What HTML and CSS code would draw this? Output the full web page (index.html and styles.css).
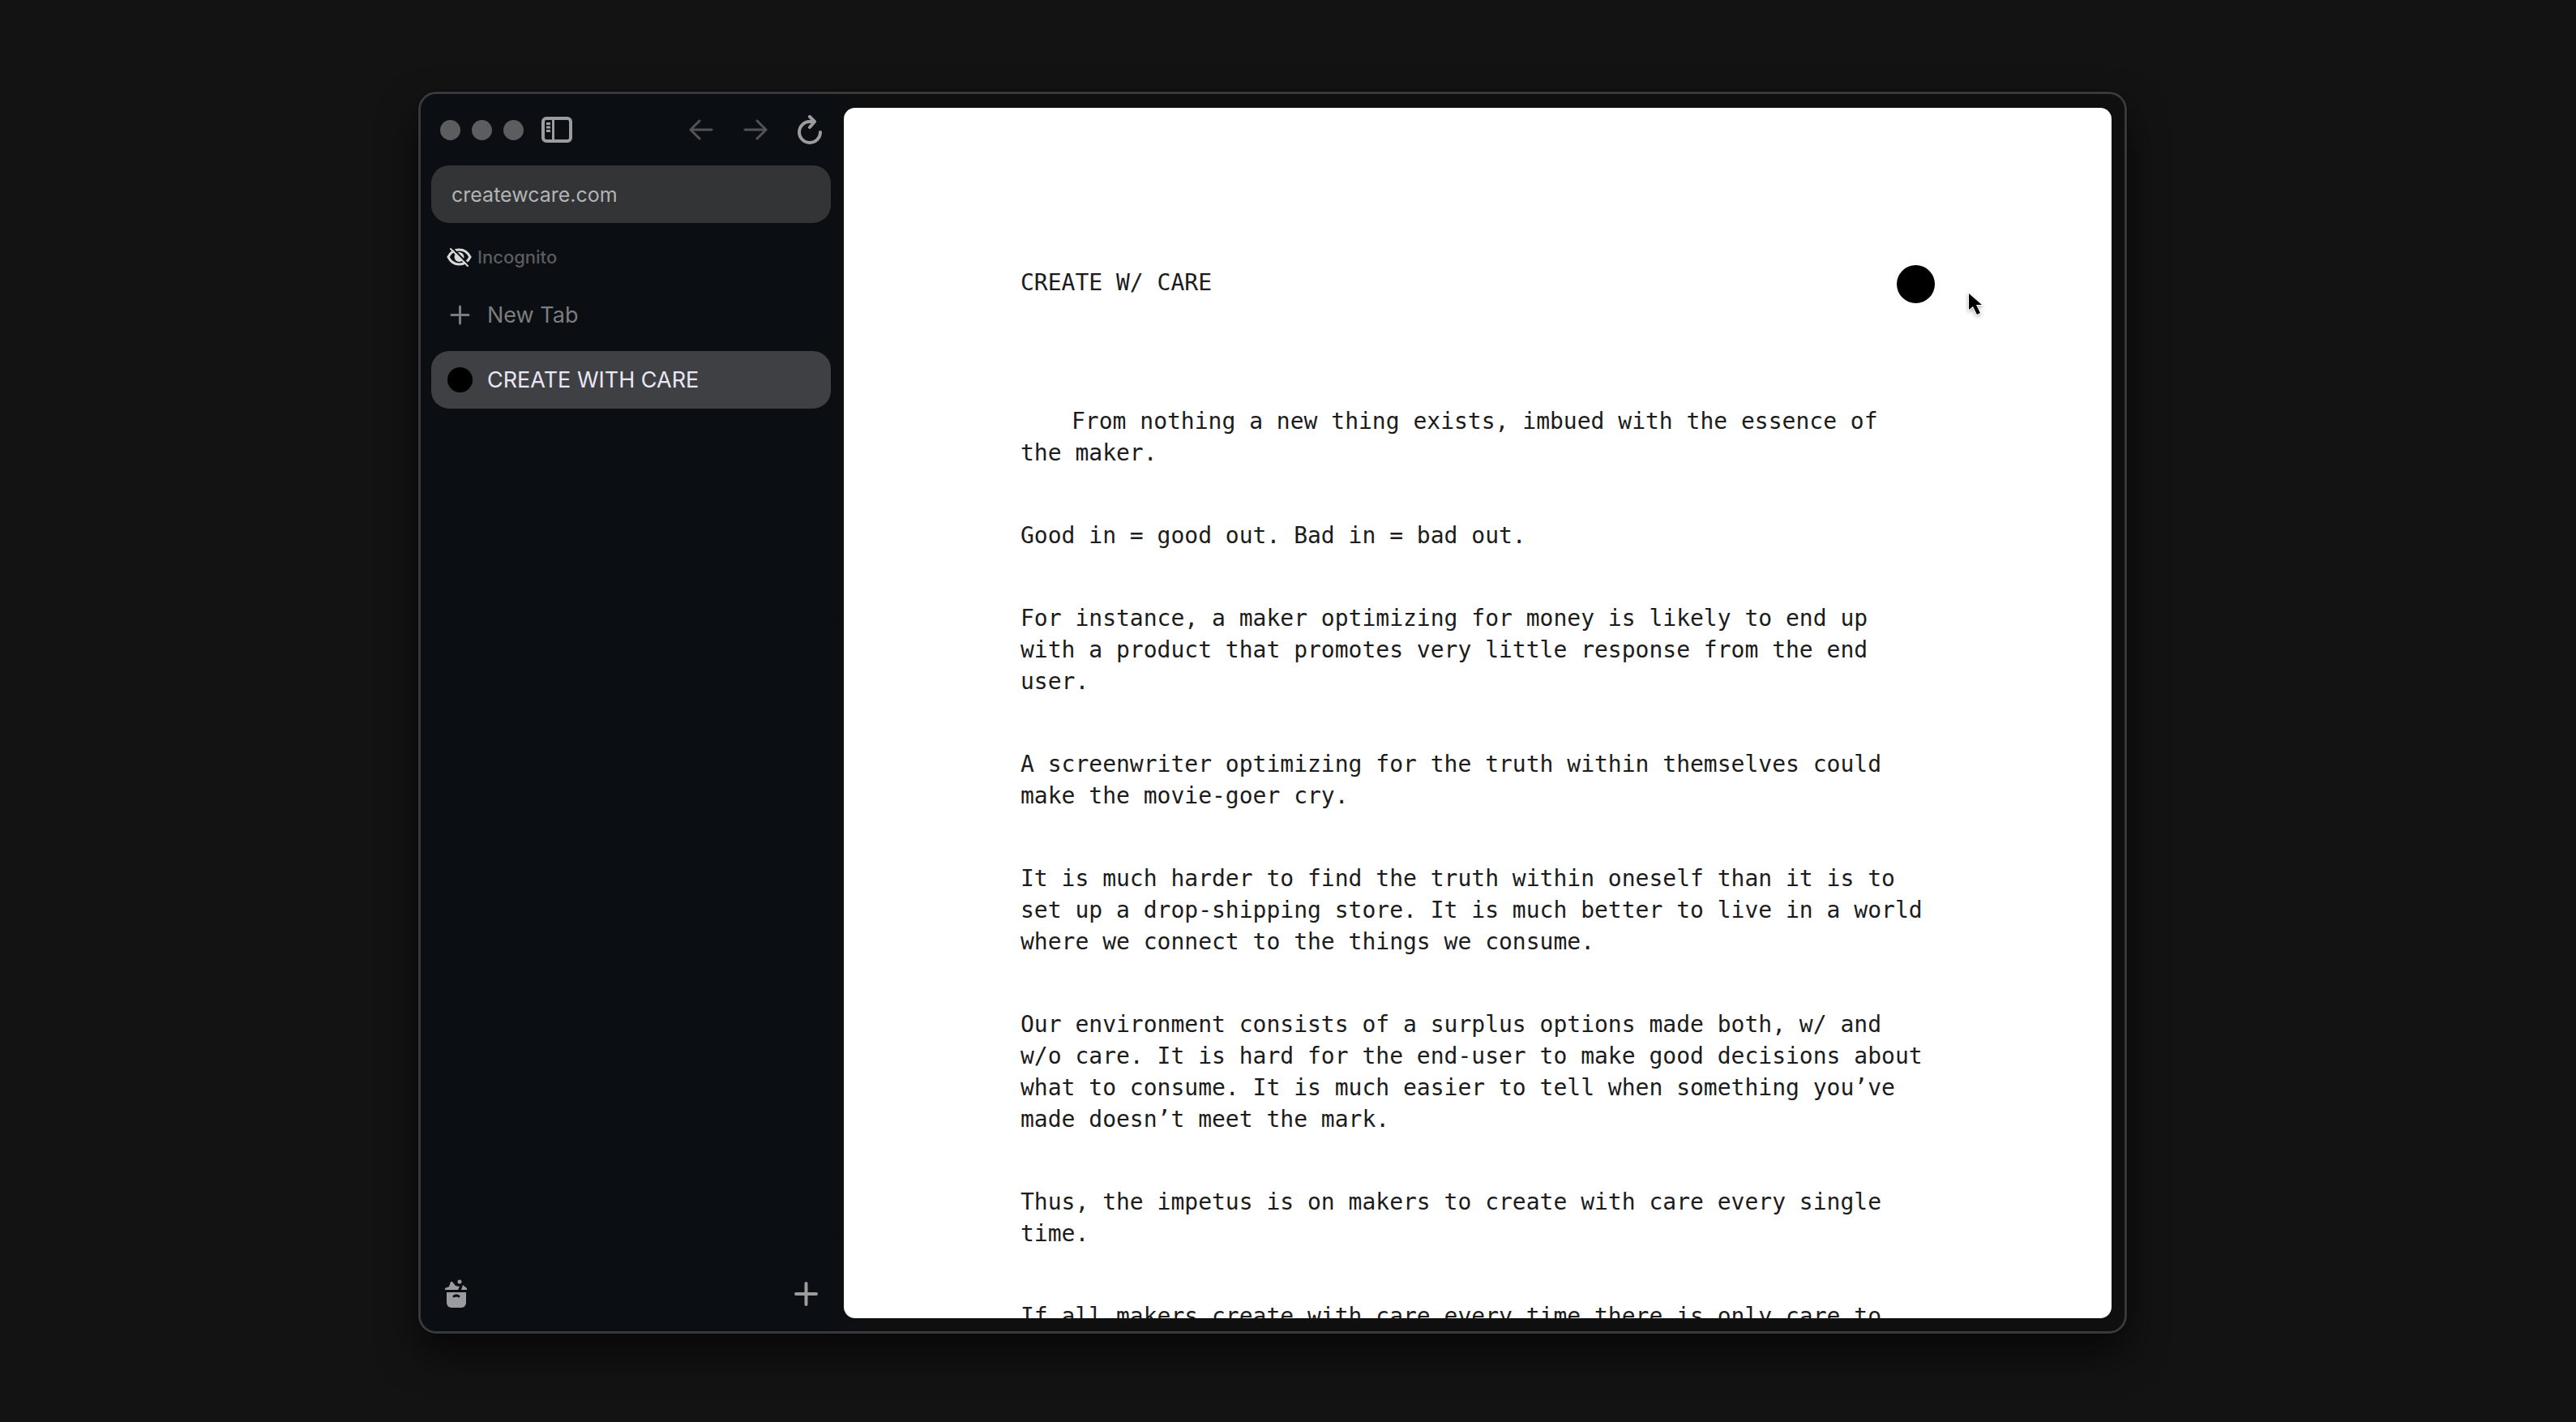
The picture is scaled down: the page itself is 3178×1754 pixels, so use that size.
FILE: index.html
```html
<!DOCTYPE html>
<html lang="en">
<head>
<meta charset="utf-8">
<title>CREATE WITH CARE</title>
<link rel="stylesheet" href="styles.css">
</head>
<body>
<div class="window">
  <aside class="sidebar">
    <div class="toolbar">
      <div class="lights">
        <button class="light" aria-label="Close"></button>
        <button class="light" aria-label="Minimize"></button>
        <button class="light" aria-label="Zoom"></button>
      </div>
      <button class="icon-button" aria-label="Toggle sidebar">
        <svg width="38" height="32" viewBox="0 0 38 32" fill="none" stroke="currentColor">
          <rect x="2" y="2" width="34" height="28" rx="4" stroke-width="4"/>
          <path d="M14.500 2v28" stroke-width="3"/>
          <path d="M6 8.500h5M6 13h5M6 17.500h5" stroke-width="3"/>
        </svg>
      </button>
      <nav class="history">
        <button class="icon-button dim" aria-label="Back">
          <svg width="30" height="26" viewBox="0 0 30 26" fill="none" stroke="currentColor" stroke-width="3" stroke-linecap="round" stroke-linejoin="round"><path d="M28 13H2M13 2L2 13l11 11"/></svg>
        </button>
        <button class="icon-button dim" aria-label="Forward">
          <svg width="30" height="26" viewBox="0 0 30 26" fill="none" stroke="currentColor" stroke-width="3" stroke-linecap="round" stroke-linejoin="round"><path d="M2 13h26M17 2l11 11-11 11"/></svg>
        </button>
        <button class="icon-button" aria-label="Reload">
          <svg width="30" height="36" viewBox="0 0 30 36" fill="none" stroke="currentColor" stroke-width="4" stroke-linecap="round" stroke-linejoin="round"><path d="M28 21a13 13 0 1 1-13-13h5"/><path d="M15 2l6 6-6 7"/></svg>
        </button>
      </nav>
    </div>
    <input class="address" type="text" value="createwcare.com" aria-label="Address">
    <div class="mode">
      <svg width="31" height="24" viewBox="0 0 31 24" fill="none" stroke="currentColor" stroke-width="3" stroke-linecap="round">
        <path d="M2 12C5 6 10 3 15.500 3S26 6 29 12c-3 6-8 9-13.500 9S5 18 2 12z"/>
        <circle cx="15.500" cy="12" r="6" fill="currentColor" stroke="none"/>
        <path d="M7 1l21 21" class="slash" stroke-width="2"/>
        <path d="M5 2l21 21" stroke-width="2"/>
      </svg>
      <span>Incognito</span>
    </div>
    <div class="tabs">
      <button class="tab">
        <svg class="tab-icon" viewBox="0 0 31 31" fill="none" stroke="currentColor" stroke-width="3" stroke-linecap="round"><path d="M15.500 5v21M5 15.500h21"/></svg>
        New Tab
      </button>
      <button class="tab active"><span class="tab-icon favicon"></span>CREATE WITH CARE</button>
    </div>
    <div class="footer">
      <button class="icon-button" aria-label="Archive">
        <svg width="28" height="36" viewBox="0 0 28 36" fill="currentColor">
          <path d="M2 16h24v13a6 6 0 0 1-6 6H8a6 6 0 0 1-6-6z"/>
          <path d="M0 13v-2l5-2 2-6h2l4 5 5 1-2 4z"/>
          <path d="M20 13l2-6 5 4v2z"/>
          <circle cx="18" cy="3" r="2.500"/>
          <path d="M11 21q3-2 6 0" fill="none" class="slot" stroke-width="3" stroke-linecap="round"/>
        </svg>
      </button>
      <button class="icon-button" aria-label="Add">
        <svg width="29" height="30" viewBox="0 0 29 30" fill="none" stroke="currentColor" stroke-width="4" stroke-linecap="round"><path d="M14.500 2v26M2 15h25"/></svg>
      </button>
    </div>
  </aside>
  <main class="page">
    <header class="masthead">
      <h1>CREATE W/ CARE</h1>
      <span class="dot"></span>
      <svg class="cursor" width="26" height="36" viewBox="0 0 26 36"><path d="M4 2v20l5-4 5 10 4-2-5-10h7z" fill="#000" stroke="#fff" stroke-width="2" paint-order="stroke"/></svg>
    </header>
    <article>
      <p class="lead">From nothing a new thing exists, imbued with the essence of the maker.</p>
      <p>Good in = good out. Bad in = bad out.</p>
      <p>For instance, a maker optimizing for money is likely to end up with a product that promotes very little response from the end user.</p>
      <p>A screenwriter optimizing for the truth within themselves could make the movie-goer cry.</p>
      <p>It is much harder to find the truth within oneself than it is to set up a drop-shipping store. It is much better to live in a world where we connect to the things we consume.</p>
      <p>Our environment consists of a surplus options made both, w/ and w/o care. It is hard for the end-user to make good decisions about what to consume. It is much easier to tell when something you’ve made doesn’t meet the mark.</p>
      <p>Thus, the impetus is on makers to create with care every single time.</p>
      <p>If all makers create with care every time there is only care to</p>
    </article>
  </main>
</div>
</body>
</html>
```
FILE: styles.css
```css
* {
  box-sizing: border-box;
}

body {
  margin: 0;
  height: 100vh;
  padding: 113px 554px 109px 516px;
  background: #131313;
  font-family: Inter, "Liberation Sans", sans-serif;
}

button {
  margin: 0;
  padding: 0;
  border: 0;
  background: none;
  color: inherit;
  font: inherit;
}

svg {
  display: block;
}

.window {
  display: grid;
  grid-template-columns: 522px minmax(0, 1fr);
  height: 100%;
  padding: 17px 16px 16px 0;
  border: 3px solid #38393a;
  border-radius: 22px;
  background: linear-gradient(90deg, #0b0e12 500px, #0f0f0f 560px);
  box-shadow: 0 0 0 1px #070707, 0 24px 48px rgba(0, 0, 0, 0.6);
}

.sidebar {
  display: flex;
  flex-direction: column;
  padding: 5px 16px 8px 13px;
}

.toolbar {
  display: flex;
  align-items: center;
  height: 44px;
  padding: 0 11px;
  color: #9b9c9e;
}

.lights {
  display: flex;
  gap: 14px;
  margin-right: 22px;
}

.light {
  width: 25px;
  height: 25px;
  border-radius: 50%;
  background: #5c5d5f;
}

.history {
  display: flex;
  align-items: center;
  gap: 37px;
  margin-left: auto;
}

.dim {
  color: #515356;
}

.address {
  height: 71px;
  margin-top: 22px;
  padding: 0 25px;
  border: 0;
  border-radius: 22px;
  background: #333436;
  color: #b2b3b5;
  font: 400 25px Inter, "Liberation Sans", sans-serif;
}

.mode {
  display: flex;
  align-items: center;
  gap: 7px;
  height: 26px;
  margin-top: 29px;
  padding-left: 19px;
  color: #d8d8d9;
  font-size: 22px;
  font-weight: 500;
}

.mode span {
  color: #5b5d60;
}

.slash,
.slot {
  stroke: #0b0e12;
}

.tabs {
  display: flex;
  flex-direction: column;
  gap: 9px;
  margin-top: 23px;
}

.tab {
  display: flex;
  align-items: center;
  gap: 18px;
  height: 71px;
  padding: 0 20px;
  border-radius: 22px;
  color: #7c7d7f;
  font-size: 27px;
  font-weight: 400;
  text-align: left;
}

.tab.active {
  background: #3f4043;
  color: #e9e6f5;
}

.tab-icon {
  width: 31px;
  height: 31px;
}

.favicon {
  border-radius: 50%;
  background: #000;
}

.footer {
  display: flex;
  align-items: center;
  justify-content: space-between;
  height: 44px;
  margin-top: auto;
  padding: 0 16px 0 17px;
  color: #9b9c9e;
}

.page {
  overflow: hidden;
  padding: 194px 218px 0;
  border-radius: 14px;
  background: #fff;
  color: #1c1c1c;
  font-family: "DejaVu Sans Mono", monospace;
  font-size: 28px;
  line-height: 39px;
}

.masthead {
  position: relative;
  display: flex;
  justify-content: space-between;
}

h1 {
  margin: 2px 0 0;
  font-size: inherit;
  font-weight: 400;
}

.dot {
  width: 47px;
  height: 47px;
  border-radius: 50%;
  background: #000;
}

.cursor {
  position: absolute;
  top: 33px;
  right: -64px;
  filter: drop-shadow(0 2px 2px rgba(0, 0, 0, 0.3));
}

article {
  display: flex;
  flex-direction: column;
  gap: 63px;
  margin-top: 126px;
  padding-right: 10px;
}

p {
  margin: 0;
}

.lead {
  text-indent: 63px;
}
```
